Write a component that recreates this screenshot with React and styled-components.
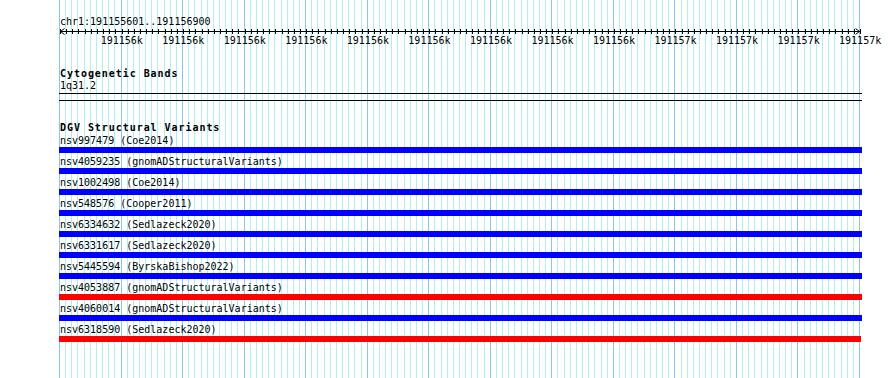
import styled, { createGlobalStyle } from "styled-components";

const GlobalStyle = createGlobalStyle`
    body {
        margin: 0;
        background: #ffffff;
        font-family: "DejaVu Sans Mono", "Liberation Mono", monospace;
        font-size: 10px;
        color: #000000;
    }
`

const START = 60;
const SPAN = 800;
const MINOR = 130;

const variants = [
    { id: "nsv997479", source: "Coe2014", kind: "gain" },
    { id: "nsv4059235", source: "gnomADStructuralVariants", kind: "gain" },
    { id: "nsv1002498", source: "Coe2014", kind: "gain" },
    { id: "nsv548576", source: "Cooper2011", kind: "gain" },
    { id: "nsv6334632", source: "Sedlazeck2020", kind: "gain" },
    { id: "nsv6331617", source: "Sedlazeck2020", kind: "gain" },
    { id: "nsv5445594", source: "ByrskaBishop2022", kind: "gain" },
    { id: "nsv4053887", source: "gnomADStructuralVariants", kind: "loss" },
    { id: "nsv4060014", source: "gnomADStructuralVariants", kind: "gain" },
    { id: "nsv6318590", source: "Sedlazeck2020", kind: "loss", short: true },
];

const tickLabels = [
    "191156k", "191156k", "191156k", "191156k", "191156k", "191156k", "191156k",
    "191156k", "191156k", "191157k", "191157k", "191157k", "191157k",
];

const Page = styled.div `
    position: relative;
    width: 890px;
    height: 378px;
    overflow: hidden;
    background: #ffffff;
`

const GridLayer = styled.svg `
    position: absolute;
    left: 0;
    top: 0;
    z-index: 0;
`

const Content = styled.div `
    position: relative;
    z-index: 1;
    display: flex;
    flex-direction: column;
    padding: 16px 0 0 60px;
`

const Line = styled.div `
    height: 12px;
    line-height: 12px;
    white-space: pre;
`

const Ruler = styled.svg `
    display: block;
    margin-left: 0;
`

const TickRow = styled.div `
    display: flex;
    height: 12px;
    line-height: 12px;
    margin-left: 31px;
`

const TickLabel = styled.div `
    width: ${SPAN / 13}px;
    flex: none;
    display: flex;
    justify-content: center;
    white-space: nowrap;
`

const Track = styled.section `
    display: flex;
    flex-direction: column;
    margin-top: 21px;
`

const TrackTitle = styled(Line) `
    font-weight: bold;
    letter-spacing: 0.95px;
`

const BandBox = styled.div `
    height: 6px;
    width: 803px;
    margin: 1px 0 0 -1px;
    border-top: 1px solid #000000;
    border-bottom: 1px solid #000000;
`

const Rows = styled.div `
    display: flex;
    flex-direction: column;
    gap: 3px;
    margin-top: 1px;
`

const Row = styled.div `
    display: flex;
    flex-direction: column;
`

const Bar = styled.div `
    height: 6px;
    width: ${props => props.short ? "802px" : "803px"};
    margin-left: -1px;
    background: ${props => props.kind === "loss" ? "#ff0000" : "#0000ff"};
`

const Grid = () => {
    const lines = [];
    for (let i = 0; i <= MINOR; i++) {
        const x = Math.round(START + (i * SPAN) / MINOR) - 0.5;
        const major = i % 10 === 0;
        lines.push(
            <line key={i} x1={x} x2={x} y1={0} y2={378}
                stroke={major ? "#88c6ec" : "#b2eef0"} strokeWidth="1" />
        );
    }
    return (
        <GridLayer width="890" height="378" shapeRendering="crispEdges">
            {lines}
        </GridLayer>
    );
}

const Axis = () => {
    const ticks = [];
    for (let i = 0; i <= MINOR; i++) {
        const x = Math.round((i * SPAN) / MINOR) + 0.5;
        ticks.push(<line key={i} x1={x} x2={x} y1={1} y2={6} stroke="#000" />);
    }
    return (
        <Ruler width="803" height="7" shapeRendering="crispEdges">
            <line x1="0" x2="800" y1="3.5" y2="3.5" stroke="#000" />
            {ticks}
            <polyline points="4.5,0.5 0.5,3.5 4.5,6.5" fill="none" stroke="#000" shapeRendering="auto" />
            <polyline points="795.5,0.5 799.5,3.5 795.5,6.5" fill="none" stroke="#000" shapeRendering="auto" />
        </Ruler>
    );
}

const App = () => {
    return (
        <Page>
            <GlobalStyle />
            <Grid />
            <Content>
                <Line>chr1:191155601..191156900</Line>
                <Axis />
                <TickRow>
                    {tickLabels.map((t, i) => <TickLabel key={i}>{t}</TickLabel>)}
                </TickRow>

                <Track>
                    <TrackTitle>Cytogenetic Bands</TrackTitle>
                    <Line>1q31.2</Line>
                    <BandBox />
                </Track>

                <Track>
                    <TrackTitle>DGV Structural Variants</TrackTitle>
                    <Rows>
                        {variants.map(v => (
                            <Row key={v.id}>
                                <Line>{v.id} ({v.source})</Line>
                                <Bar kind={v.kind} short={v.short} />
                            </Row>
                        ))}
                    </Rows>
                </Track>
            </Content>
        </Page>
    )
}

export default App;
